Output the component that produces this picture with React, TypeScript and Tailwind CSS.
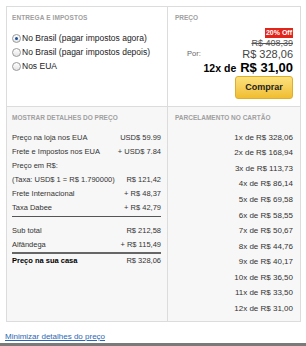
import React from "react";

const DETAILS = [
  { label: "Preço na loja nos EUA", value: "USD$ 59.99" },
  { label: "Frete e Impostos nos EUA", value: "+ USD$ 7.84" },
  { label: "Preço em R$:", value: "" },
  { label: "(Taxa: USD$ 1 = R$ 1.790000)", value: "R$ 121,42" },
  { label: "Frete Internacional", value: "+ R$ 48,37" },
  { label: "Taxa Dabee", value: "+ R$ 42,79" },
];

const PARCELAS = [
  "1x de R$ 328,06",
  "2x de R$ 168,94",
  "3x de R$ 113,73",
  "4x de R$ 86,14",
  "5x de R$ 69,58",
  "6x de R$ 58,55",
  "7x de R$ 50,67",
  "8x de R$ 44,76",
  "9x de R$ 40,17",
  "10x de R$ 36,50",
  "11x de R$ 33,50",
  "12x de R$ 31,00",
];

const OPTIONS = [
  "No Brasil (pagar impostos agora)",
  "No Brasil (pagar impostos depois)",
  "Nos EUA",
];

function Radio({ checked }: { checked?: boolean }) {
  return (
    <span className="flex h-[9px] w-[9px] items-center justify-center rounded-full border border-[#9a9a9a] bg-gradient-to-b from-white to-[#e4e4e4]">
      {checked && <span className="h-[3px] w-[3px] rounded-full bg-[#1c4f9c]" />}
    </span>
  );
}

export default function App() {
  return (
    <div className="w-[306px] bg-white font-['Liberation_Sans',Arial,sans-serif] text-[#333]">
      <div className="ml-[6px] mt-[6px] grid w-[295px] grid-cols-[161px_1fr] grid-rows-[99px_215px] border border-[#dcdcdc]">
        {/* Entrega e impostos */}
        <div className="border-r border-[#dcdcdc] bg-white pl-[5px] pt-[6px]">
          <div className="text-[6.5px] font-bold uppercase tracking-[0.1px] text-[#a0a0a0]">Entrega e impostos</div>
          <div className="mt-[9px] flex flex-col">
            {OPTIONS.map((o, i) => (
              <div key={o} className="flex h-[14px] items-center gap-[1px] text-[8.5px] text-[#222]">
                <Radio checked={i === 0} />
                <span>{o}</span>
              </div>
            ))}
          </div>
        </div>

        {/* Preço */}
        <div className="flex flex-col bg-white pl-[7px] pr-[7px] pt-[6px]">
          <div className="text-[6.5px] font-bold uppercase text-[#a0a0a0]">Preço</div>
          <div className="mt-[5px] flex justify-end">
            <span className="bg-[#e1251b] px-[1px] text-[7px] font-bold leading-[10px] text-white">20% Off</span>
          </div>
          <div className="flex justify-end text-[9px] leading-[10px] text-[#555] line-through">R$ 408,39</div>
          <div className="flex items-center justify-between leading-[12px]">
            <span className="pl-[12px] text-[7.5px] text-[#666]">Por:</span>
            <span className="text-[11px] text-[#444]">R$ 328,06</span>
          </div>
          <div className="flex items-baseline justify-end gap-[4px] font-bold leading-[15px] text-black">
            <span className="text-[10.5px]">12x de</span>
            <span className="text-[13px]">R$ 31,00</span>
          </div>
          <div className="flex justify-end">
            <button className="h-[23px] w-[58px] rounded-[3px] border border-[#dfae2c] bg-gradient-to-b from-[#fbe27c] to-[#f0bd2c] text-[9px] font-bold text-[#222]">
              Comprar
            </button>
          </div>
        </div>

        {/* Detalhes */}
        <div className="border-r border-t border-[#dcdcdc] bg-[#f7f7f7] pl-[5px] pr-[6px] pt-[6px]">
          <div className="text-[6.5px] font-bold uppercase text-[#a0a0a0]">Mostrar detalhes do preço</div>
          <div className="mt-[8px]">
            {DETAILS.map((d) => (
              <div key={d.label} className="flex h-[14px] items-center justify-between text-[7.5px] text-[#333]">
                <span>{d.label}</span>
                <span>{d.value}</span>
              </div>
            ))}
          </div>
          <div className="mt-[1px] h-px bg-[#555]" />
          <div className="mt-[7px] flex h-[14px] items-center justify-between text-[7.5px]">
            <span>Sub total</span>
            <span>R$ 212,58</span>
          </div>
          <div className="flex h-[14px] items-center justify-between text-[7.5px]">
            <span>Alfândega</span>
            <span>+ R$ 115,49</span>
          </div>
          <div className="h-[2px] bg-[#666]" />
          <div className="flex h-[14px] items-center justify-between text-[7.5px]">
            <span className="font-bold text-black">Preço na sua casa</span>
            <span>R$ 328,06</span>
          </div>
        </div>

        {/* Parcelamento */}
        <div className="border-t border-[#dcdcdc] bg-[#f7f7f7] pl-[7px] pr-[7px] pt-[6px]">
          <div className="text-[6.5px] font-bold uppercase text-[#a0a0a0]">Parcelamento no cartão</div>
          <div className="mt-[7px] flex flex-col items-end">
            {PARCELAS.map((p) => (
              <div key={p} className="flex h-[15.6px] items-center text-[8px] text-[#333]">{p}</div>
            ))}
          </div>
        </div>
      </div>

      <div className="ml-[5px] mt-[10px] text-[8px] leading-[10px] text-[#2b67b5] underline">Minimizar detalhes do preço</div>
      <div className="mt-[1px] h-[4px] bg-[#7a7a7a]" />
    </div>
  );
}
